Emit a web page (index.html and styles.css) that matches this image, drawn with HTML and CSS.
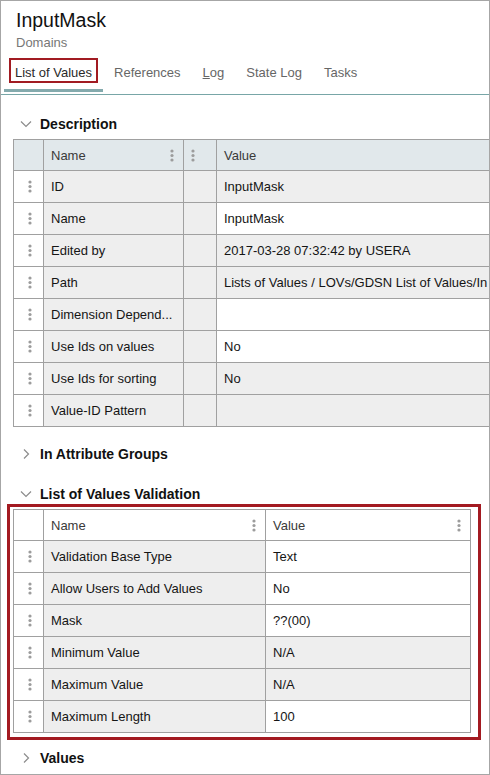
FILE: index.html
```html
<!DOCTYPE html>
<html lang="en">
<head>
    <meta charset="UTF-8">
    <title>InputMask</title>
    <link rel="stylesheet" href="styles.css">
</head>
<body>
<div class="panel">
    <div class="page-head">
        <div class="title">InputMask</div>
        <div class="subtitle">Domains</div>
    </div>

    <div class="tabs">
        <div class="tab active"><span class="tab-label marked">List of Values</span></div>
        <div class="tab"><span class="tab-label">References</span></div>
        <div class="tab"><span class="tab-label"><span class="ak">L</span>og</span></div>
        <div class="tab"><span class="tab-label">State Log</span></div>
        <div class="tab"><span class="tab-label">Tasks</span></div>
    </div>

    <div class="content">
        <!-- Description -->
        <div class="section">
            <div class="section-head">
                <svg class="chevron" width="12" height="12" viewBox="0 0 12 12"><path d="M1 3.5 L6 8.5 L11 3.5"/></svg>
                <span>Description</span>
            </div>
            <div class="section-body">
                <table class="grid wide">
                    <colgroup><col style="width:30px"><col style="width:140px"><col style="width:33px"><col style="width:320px"></colgroup>
                    <tr class="head blue">
                        <td></td>
                        <td><div class="hcell">Name<svg class="kebab" width="4" height="13" viewBox="0 0 4 13"><circle cx="2" cy="2" r="1.6"/><circle cx="2" cy="6.5" r="1.6"/><circle cx="2" cy="11" r="1.6"/></svg></div></td>
                        <td><div class="hcell"><svg class="kebab" width="4" height="13" viewBox="0 0 4 13"><circle cx="2" cy="2" r="1.6"/><circle cx="2" cy="6.5" r="1.6"/><circle cx="2" cy="11" r="1.6"/></svg></div></td>
                        <td>Value</td>
                    </tr>
                    <tr><td class="grip"><svg class="kebab" width="4" height="13" viewBox="0 0 4 13"><circle cx="2" cy="2" r="1.6"/><circle cx="2" cy="6.5" r="1.6"/><circle cx="2" cy="11" r="1.6"/></svg></td><td class="ro">ID</td><td class="ro"></td><td class="ro">InputMask</td></tr>
                    <tr><td class="grip"><svg class="kebab" width="4" height="13" viewBox="0 0 4 13"><circle cx="2" cy="2" r="1.6"/><circle cx="2" cy="6.5" r="1.6"/><circle cx="2" cy="11" r="1.6"/></svg></td><td class="ro">Name</td><td class="ro"></td><td>InputMask</td></tr>
                    <tr><td class="grip"><svg class="kebab" width="4" height="13" viewBox="0 0 4 13"><circle cx="2" cy="2" r="1.6"/><circle cx="2" cy="6.5" r="1.6"/><circle cx="2" cy="11" r="1.6"/></svg></td><td class="ro">Edited by</td><td class="ro"></td><td class="ro">2017-03-28 07:32:42 by USERA</td></tr>
                    <tr><td class="grip"><svg class="kebab" width="4" height="13" viewBox="0 0 4 13"><circle cx="2" cy="2" r="1.6"/><circle cx="2" cy="6.5" r="1.6"/><circle cx="2" cy="11" r="1.6"/></svg></td><td class="ro">Path</td><td class="ro"></td><td class="ro">Lists of Values / LOVs/GDSN List of Values/In</td></tr>
                    <tr><td class="grip"><svg class="kebab" width="4" height="13" viewBox="0 0 4 13"><circle cx="2" cy="2" r="1.6"/><circle cx="2" cy="6.5" r="1.6"/><circle cx="2" cy="11" r="1.6"/></svg></td><td class="ro">Dimension Depend...</td><td class="ro"></td><td></td></tr>
                    <tr><td class="grip"><svg class="kebab" width="4" height="13" viewBox="0 0 4 13"><circle cx="2" cy="2" r="1.6"/><circle cx="2" cy="6.5" r="1.6"/><circle cx="2" cy="11" r="1.6"/></svg></td><td class="ro">Use Ids on values</td><td class="ro"></td><td>No</td></tr>
                    <tr><td class="grip"><svg class="kebab" width="4" height="13" viewBox="0 0 4 13"><circle cx="2" cy="2" r="1.6"/><circle cx="2" cy="6.5" r="1.6"/><circle cx="2" cy="11" r="1.6"/></svg></td><td class="ro">Use Ids for sorting</td><td class="ro"></td><td class="ro">No</td></tr>
                    <tr><td class="grip"><svg class="kebab" width="4" height="13" viewBox="0 0 4 13"><circle cx="2" cy="2" r="1.6"/><circle cx="2" cy="6.5" r="1.6"/><circle cx="2" cy="11" r="1.6"/></svg></td><td class="ro">Value-ID Pattern</td><td class="ro"></td><td class="ro"></td></tr>
                </table>
            </div>
        </div>

        <!-- In Attribute Groups -->
        <div class="section collapsed">
            <div class="section-head">
                <svg class="chevron" width="12" height="12" viewBox="0 0 12 12"><path d="M4 1.5 L8.5 6 L4 10.5"/></svg>
                <span>In Attribute Groups</span>
            </div>
        </div>

        <!-- List of Values Validation -->
        <div class="section">
            <div class="section-head">
                <svg class="chevron" width="12" height="12" viewBox="0 0 12 12"><path d="M1 3.5 L6 8.5 L11 3.5"/></svg>
                <span>List of Values Validation</span>
            </div>
            <div class="section-body marked-box">
                <table class="grid">
                    <colgroup><col style="width:30px"><col style="width:222px"><col style="width:205px"></colgroup>
                    <tr class="head">
                        <td></td>
                        <td><div class="hcell">Name<svg class="kebab" width="4" height="13" viewBox="0 0 4 13"><circle cx="2" cy="2" r="1.6"/><circle cx="2" cy="6.5" r="1.6"/><circle cx="2" cy="11" r="1.6"/></svg></div></td>
                        <td><div class="hcell">Value<svg class="kebab" width="4" height="13" viewBox="0 0 4 13"><circle cx="2" cy="2" r="1.6"/><circle cx="2" cy="6.5" r="1.6"/><circle cx="2" cy="11" r="1.6"/></svg></div></td>
                    </tr>
                    <tr><td class="grip"><svg class="kebab" width="4" height="13" viewBox="0 0 4 13"><circle cx="2" cy="2" r="1.6"/><circle cx="2" cy="6.5" r="1.6"/><circle cx="2" cy="11" r="1.6"/></svg></td><td class="ro">Validation Base Type</td><td>Text</td></tr>
                    <tr><td class="grip"><svg class="kebab" width="4" height="13" viewBox="0 0 4 13"><circle cx="2" cy="2" r="1.6"/><circle cx="2" cy="6.5" r="1.6"/><circle cx="2" cy="11" r="1.6"/></svg></td><td class="ro">Allow Users to Add Values</td><td>No</td></tr>
                    <tr><td class="grip"><svg class="kebab" width="4" height="13" viewBox="0 0 4 13"><circle cx="2" cy="2" r="1.6"/><circle cx="2" cy="6.5" r="1.6"/><circle cx="2" cy="11" r="1.6"/></svg></td><td class="ro">Mask</td><td>??(00)</td></tr>
                    <tr><td class="grip"><svg class="kebab" width="4" height="13" viewBox="0 0 4 13"><circle cx="2" cy="2" r="1.6"/><circle cx="2" cy="6.5" r="1.6"/><circle cx="2" cy="11" r="1.6"/></svg></td><td class="ro">Minimum Value</td><td class="ro">N/A</td></tr>
                    <tr><td class="grip"><svg class="kebab" width="4" height="13" viewBox="0 0 4 13"><circle cx="2" cy="2" r="1.6"/><circle cx="2" cy="6.5" r="1.6"/><circle cx="2" cy="11" r="1.6"/></svg></td><td class="ro">Maximum Value</td><td class="ro">N/A</td></tr>
                    <tr><td class="grip"><svg class="kebab" width="4" height="13" viewBox="0 0 4 13"><circle cx="2" cy="2" r="1.6"/><circle cx="2" cy="6.5" r="1.6"/><circle cx="2" cy="11" r="1.6"/></svg></td><td class="ro">Maximum Length</td><td>100</td></tr>
                </table>
            </div>
        </div>

        <!-- Values -->
        <div class="section collapsed">
            <div class="section-head">
                <svg class="chevron" width="12" height="12" viewBox="0 0 12 12"><path d="M4 1.5 L8.5 6 L4 10.5"/></svg>
                <span>Values</span>
            </div>
        </div>
    </div>
</div>
</body>
</html>
```

FILE: styles.css
```css
body {
    margin: 0;
    font-family: "Liberation Sans", Arial, sans-serif;
    color: #1a1a1a;
    background: #ffffff;
}

.panel {
    width: 490px;
    height: 775px;
    box-sizing: border-box;
    border: 1px solid #a6a6a6;
    overflow: hidden;
    background: #ffffff;
}

/* Kopfbereich */
.page-head {
    padding: 7px 0 0 15px;
}

.title {
    font-size: 19.5px;
    line-height: 24px;
    color: #111;
}

.subtitle {
    margin-top: 3px;
    font-size: 13px;
    line-height: 16px;
    color: #777;
}

/* Reiter */
.tabs {
    display: flex;
    padding-left: 3px;
    border-bottom: 1px solid #78a6a7;
}

.tab {
    padding: 7px 5px 6px;
    border-bottom: 3px solid transparent;
    margin-bottom: 2px;
    font-size: 13px;
    color: #666;
}

.tab.active {
    border-bottom-color: #84aaad;
    color: #2a2a2a;
}

.tab-label {
    display: block;
    padding: 4px 4px 0;
    line-height: 17px;
    border: 2px solid transparent;
}

.tab-label.marked {
    border-color: #a11b22;
}

.ak {
    text-decoration: underline;
}

/* Abschnitte */
.content {
    padding-top: 2px;
}

.section {
    margin-top: 18px;
}

.section.collapsed {
    padding-bottom: 5px;
}

.section-head {
    display: flex;
    align-items: center;
    height: 17px;
    padding-left: 19px;
    font-size: 14px;
    font-weight: bold;
    color: #111;
}

.chevron {
    margin-right: 8px;
    fill: none;
    stroke: #8c8c8c;
    stroke-width: 1.2;
}

.section-body {
    margin: 7px 0 0 12px;
}

.marked-box {
    margin: 2px 8px -9px 6px;
    padding: 2px 7px 4px 3px;
    border: 3px solid #a31a21;
}

/* Tabellen */
.grid {
    border-collapse: separate;
    border-spacing: 0;
    table-layout: fixed;
    width: 458px;
    border-top: 1px solid #a0a0a0;
    border-left: 1px solid #a0a0a0;
    font-size: 13px;
}

.grid.wide {
    width: 524px;
}

.grid td {
    border-right: 1px solid #a0a0a0;
    border-bottom: 1px solid #a0a0a0;
    padding: 0 7px;
    white-space: nowrap;
    overflow: hidden;
    background: #ffffff;
    color: #151515;
}

.grid tr {
    height: 32px;
}

.grid tr.head {
    height: 31px;
}

.grid tr.head td {
    color: #3a3a3a;
}

.grid tr.blue td {
    background: #e1e8eb;
}

.grid td.ro {
    background: #eeeeee;
}

.grid td.grip {
    padding: 0 0 0 3px;
    text-align: center;
    line-height: 0;
}

.hcell {
    display: flex;
    align-items: center;
    justify-content: space-between;
    padding-right: 2px;
}

.hcell:empty {
    display: none;
}

.kebab {
    fill: #9c9c9c;
    flex: none;
}
```
